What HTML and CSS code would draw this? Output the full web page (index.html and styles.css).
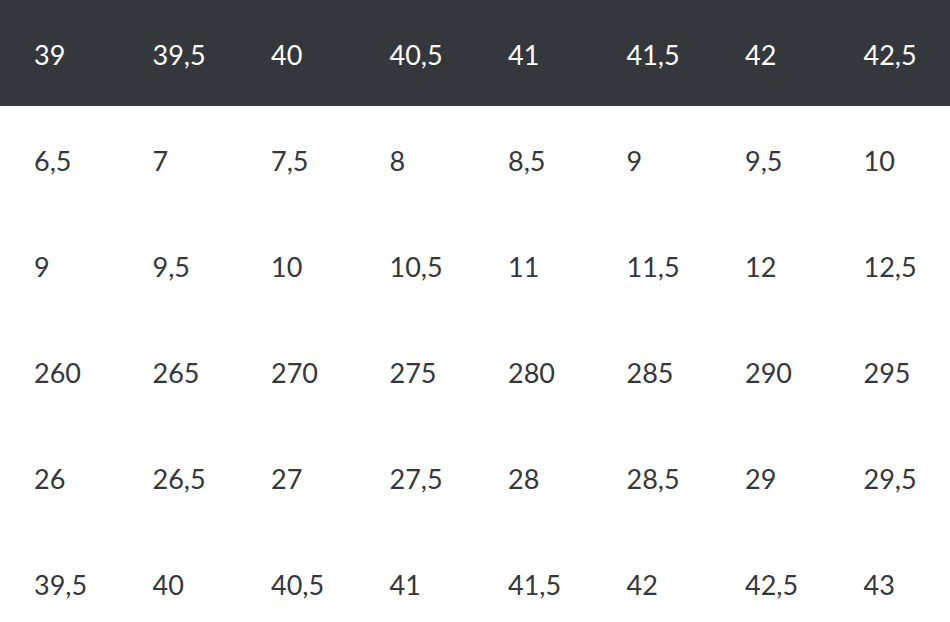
FILE: index.html
```html
<!DOCTYPE html>
<html>
<head>
<meta charset="utf-8">
<link rel="stylesheet" href="styles.css">
</head>
<body>
<table class="sizes">
<thead>
<tr><th>39</th><th>39,5</th><th>40</th><th>40,5</th><th>41</th><th>41,5</th><th>42</th><th>42,5</th></tr>
</thead>
<tbody>
<tr><td>6,5</td><td>7</td><td>7,5</td><td>8</td><td>8,5</td><td>9</td><td>9,5</td><td>10</td></tr>
<tr><td>9</td><td>9,5</td><td>10</td><td>10,5</td><td>11</td><td>11,5</td><td>12</td><td>12,5</td></tr>
<tr><td>260</td><td>265</td><td>270</td><td>275</td><td>280</td><td>285</td><td>290</td><td>295</td></tr>
<tr><td>26</td><td>26,5</td><td>27</td><td>27,5</td><td>28</td><td>28,5</td><td>29</td><td>29,5</td></tr>
<tr><td>39,5</td><td>40</td><td>40,5</td><td>41</td><td>41,5</td><td>42</td><td>42,5</td><td>43</td></tr>
</tbody>
</table>
</body>
</html>
```
FILE: styles.css
```css
html, body {
  margin: 0;
  padding: 0;
  background: #ffffff;
}
body {
  font-family: "Lato", "Open Sans", sans-serif;
  color: #34373c;
  overflow: hidden;
}
.sizes {
  width: 948px;
  border-collapse: collapse;
  table-layout: fixed;
}
.sizes thead tr {
  background: #34373c;
  color: #ffffff;
}
.sizes th,
.sizes td {
  height: 106px;
  padding: 2px 0 0 34px;
  text-align: left;
  vertical-align: middle;
  font-size: 27px;
  font-weight: 400;
  line-height: 1;
  box-sizing: border-box;
}
.sizes th:last-child {
  padding-right: 0;
}
.sizes thead th:last-child {
  box-shadow: 2px 0 0 #34373c;
}
```
